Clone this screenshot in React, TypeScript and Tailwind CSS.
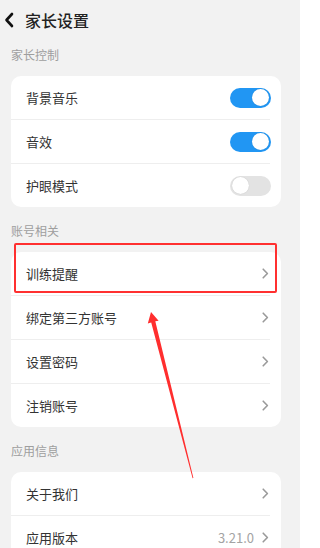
import React from "react";

type Row = { label: string; kind: "toggle" | "link"; on?: boolean; value?: string };

const sections: { title: string; rows: Row[] }[] = [
  {
    title: "家长控制",
    rows: [
      { label: "背景音乐", kind: "toggle", on: true },
      { label: "音效", kind: "toggle", on: true },
      { label: "护眼模式", kind: "toggle", on: false },
    ],
  },
  {
    title: "账号相关",
    rows: [
      { label: "训练提醒", kind: "link" },
      { label: "绑定第三方账号", kind: "link" },
      { label: "设置密码", kind: "link" },
      { label: "注销账号", kind: "link" },
    ],
  },
  {
    title: "应用信息",
    rows: [
      { label: "关于我们", kind: "link" },
      { label: "应用版本", kind: "link", value: "3.21.0" },
    ],
  },
];

function Toggle({ on }: { on?: boolean }) {
  return (
    <div
      className={
        on
          ? "flex h-[20px] w-[41px] items-center justify-end rounded-full bg-[#2196f3] px-[2px]"
          : "flex h-[20px] w-[41px] items-center justify-start rounded-full bg-[#e3e3e3] px-[2px]"
      }
    >
      <div className="h-[17px] w-[17px] rounded-full bg-white shadow-[0_0_1px_rgba(0,0,0,0.2)]" />
    </div>
  );
}

function Chevron() {
  return (
    <svg width="7" height="11" viewBox="0 0 7 11" fill="none">
      <path d="M1.2 1.2L5.4 5.5L1.2 9.8" stroke="#9a9a9a" strokeWidth="1.6" strokeLinecap="round" strokeLinejoin="round" />
    </svg>
  );
}

export default function App() {
  return (
    <div
      className="relative h-[548px] w-[300px] overflow-hidden bg-[#f2f2f2]"
      style={{ fontFamily: '"Noto Sans CJK SC", "Noto Sans", sans-serif' }}
    >
      {/* Header */}
      <div className="flex h-[31px] items-start gap-[11px] pl-[4px] pt-[11px]">
        <svg width="10" height="18" viewBox="0 0 10 18" fill="none" className="mt-[0px]">
          <path d="M8 3L2.5 9L8 15" stroke="#111" strokeWidth="2.6" strokeLinecap="round" strokeLinejoin="round" />
        </svg>
        <span className="text-[16px] font-medium leading-[18px] text-[#222]">家长设置</span>
      </div>

      {sections.map((s) => (
        <div key={s.title}>
          <div className="pb-[14px] pl-[11px] pt-[17px] text-[12px] leading-[14px] text-[#9e9e9e]">{s.title}</div>
          <div className="ml-[11px] mr-[19px] overflow-hidden rounded-[10px] bg-white">
            {s.rows.map((r, i) => (
              <div key={r.label}>
                {i > 0 && <div className="mr-[11px] h-px bg-[#eeeeee]" />}
                <div className="flex h-[43px] items-center justify-between pl-[15px] pr-[12px]">
                  <span className="text-[13px] text-[#333]">{r.label}</span>
                  {r.kind === "toggle" ? (
                    <div className="-mr-[2px]">
                      <Toggle on={r.on} />
                    </div>
                  ) : (
                    <div className="flex items-center gap-[8px]">
                      {r.value && <span className="text-[13px] text-[#a3a3a3]">{r.value}</span>}
                      <Chevron />
                    </div>
                  )}
                </div>
              </div>
            ))}
          </div>
        </div>
      ))}

      {/* Annotation: red highlight box */}
      <div className="absolute left-[14px] top-[243px] h-[50px] w-[263px] rounded-[2px] border-2 border-[#ff3030]" />

      {/* Annotation: red arrow */}
      <svg className="pointer-events-none absolute left-0 top-0" width="300" height="548" viewBox="0 0 300 548">
        <polygon
          points="151,312 158.6,320.8 155.3,321.3 193.4,478 192.6,478.2 151.2,322.4 147.8,323.4"
          fill="#ff2e2e"
        />
      </svg>
    </div>
  );
}
